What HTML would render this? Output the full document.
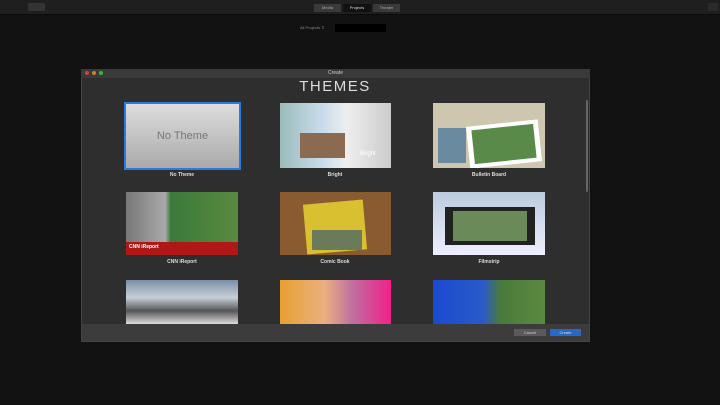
<!DOCTYPE html><html><head><style>
body{margin:0;width:720px;height:405px;background:#121212;position:relative;overflow:hidden;font-family:"Liberation Sans",sans-serif}
div{position:absolute;box-sizing:border-box}
.lbl{color:#ddd;font-size:5px;font-weight:bold;text-align:center;width:120px}
.t{overflow:hidden}
</style></head><body>
<div style="left:0;top:0;width:720px;height:15px;background:#1f1f1f;border-bottom:1px solid #0c0c0c"></div>
<div style="left:28px;top:3px;width:17px;height:8px;background:#333;border-radius:1px"></div>
<div style="left:708px;top:3px;width:10px;height:8px;background:#2a2a2a"></div>
<div style="left:314px;top:4px;width:27px;height:8px;background:#3a3a3a;color:#aaa;font-size:4px;text-align:center;line-height:8px">Media</div>
<div style="left:343px;top:4px;width:28px;height:8px;background:#111;color:#ddd;font-size:4px;text-align:center;line-height:8px">Projects</div>
<div style="left:373px;top:4px;width:27px;height:8px;background:#3a3a3a;color:#aaa;font-size:4px;text-align:center;line-height:8px">Theater</div>
<div style="left:300px;top:25px;color:#888;font-size:4px">All Projects ⇕</div>
<div style="left:335px;top:24px;width:51px;height:8px;background:#000"></div>

<div style="left:81px;top:69px;width:509px;height:273px;background:#2e2e2e;border:1px solid #444"></div>
<div style="left:81px;top:69px;width:509px;height:9px;background:#3a3a3a;color:#ccc;font-size:5px;text-align:center;line-height:9px">Create</div>
<div style="left:85px;top:71px;width:4px;height:4px;border-radius:50%;background:#c44"></div>
<div style="left:92px;top:71px;width:4px;height:4px;border-radius:50%;background:#b82"></div>
<div style="left:99px;top:71px;width:4px;height:4px;border-radius:50%;background:#3b3"></div>
<div style="left:250px;top:78px;width:170px;text-align:center;color:#ddd;font-size:15px;letter-spacing:1.5px">THEMES</div>
<div style="left:586px;top:100px;width:2px;height:92px;background:#666;border-radius:1px"></div>

<div style="left:124px;top:102px;width:117px;height:68px;border:2px solid #2a7be0;background:linear-gradient(#ddd,#aaa);color:#777;font-size:11px;text-align:center;line-height:64px">No Theme</div>
<div class="lbl" style="left:122px;top:172px">No Theme</div>
<div class="t" style="left:280px;top:103px;width:111px;height:65px;background:linear-gradient(90deg,#9bb 0,#cde 40%,#eee 60%,#ccc 100%)"><div style="left:20px;top:30px;width:45px;height:25px;background:#8a6a50"></div><div style="left:80px;top:48px;color:#fff;font-size:6px">Bright</div></div>
<div class="lbl" style="left:275px;top:172px">Bright</div>
<div class="t" style="left:433px;top:103px;width:112px;height:65px;background:#cfc6b0"><div style="left:5px;top:25px;width:28px;height:35px;background:#6a8aa0"></div><div style="left:35px;top:20px;width:72px;height:42px;background:#fff;transform:rotate(-6deg)"></div><div style="left:40px;top:24px;width:62px;height:34px;background:#5a8a4a;transform:rotate(-6deg)"></div></div>
<div class="lbl" style="left:429px;top:172px">Bulletin Board</div>

<div class="t" style="left:126px;top:192px;width:112px;height:63px;background:linear-gradient(90deg,#777,#aaa 35%,#3a7a3a 40%,#5a8a40)"><div style="left:0;top:50px;width:112px;height:13px;background:#b01818"></div><div style="left:3px;top:52px;color:#fff;font-size:5px;font-weight:bold">CNN iReport</div></div>
<div class="lbl" style="left:122px;top:259px">CNN iReport</div>
<div class="t" style="left:280px;top:192px;width:111px;height:63px;background:#8a5a30"><div style="left:25px;top:10px;width:60px;height:50px;background:#d8c030;transform:rotate(-5deg)"></div><div style="left:32px;top:38px;width:50px;height:20px;background:#6a7a5a"></div></div>
<div class="lbl" style="left:275px;top:259px">Comic Book</div>
<div class="t" style="left:433px;top:192px;width:112px;height:63px;background:linear-gradient(#bcd,#eef)"><div style="left:12px;top:15px;width:90px;height:38px;background:#222"></div><div style="left:20px;top:19px;width:74px;height:30px;background:#6a8a5a"></div></div>
<div class="lbl" style="left:429px;top:259px">Filmstrip</div>

<div class="t" style="left:126px;top:280px;width:112px;height:44px;background:linear-gradient(#7a8fa8,#c8d0d8 40%,#555 70%,#ddd)"></div>
<div class="t" style="left:280px;top:280px;width:111px;height:44px;background:linear-gradient(90deg,#e8a030,#eab080 40%,#c070a0 65%,#f0208a)"></div>
<div class="t" style="left:433px;top:280px;width:112px;height:44px;background:linear-gradient(90deg,#1a4ad0,#2a5ac8 45%,#4a7a3a 60%,#5a8a40)"></div>

<div style="left:82px;top:324px;width:507px;height:17px;background:#3c3c3c"></div>
<div style="left:514px;top:329px;width:32px;height:7px;background:#5a5a5a;color:#ccc;font-size:4px;text-align:center;line-height:7px">Cancel</div>
<div style="left:550px;top:329px;width:31px;height:7px;background:#2a68c8;color:#ddd;font-size:4px;text-align:center;line-height:7px">Create</div>
</body></html>
